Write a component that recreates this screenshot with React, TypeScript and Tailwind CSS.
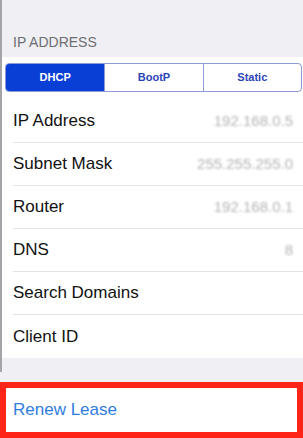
import React from 'react';

const rows: { label: string; value: string }[] = [
  { label: 'IP Address', value: '192.168.0.5' },
  { label: 'Subnet Mask', value: '255.255.255.0' },
  { label: 'Router', value: '192.168.0.1' },
  { label: 'DNS', value: '8' },
  { label: 'Search Domains', value: '' },
  { label: 'Client ID', value: '' },
];

export default function App() {
  return (
    <div className="w-[303px] h-[438px] overflow-hidden bg-[#efeff4] font-['Liberation_Sans',Arial,sans-serif]">
      <div className="border-l-2 border-[#a3a3a8] h-[372px] flex flex-col">
        <div className="h-[57px] flex items-end pl-[11px] pb-[4px]">
          <span className="text-[14px] text-[#6d6d72]">IP ADDRESS</span>
        </div>
        <div className="bg-white flex flex-col">
          <div className="pt-[6px] pl-[3px] pr-[1px]">
            <div className="grid grid-cols-3 h-[29px] rounded-[4px] border border-[#8f9bd6] overflow-hidden text-[11px] font-bold">
              <div className="bg-[#0a3fd6] text-white flex items-center justify-center">DHCP</div>
              <div className="text-[#2a44b8] flex items-center justify-center border-l border-[#8f9bd6]">BootP</div>
              <div className="text-[#2a44b8] flex items-center justify-center border-l border-[#8f9bd6]">Static</div>
            </div>
          </div>
          <div className="pt-[8px] pl-[11px]">
            {rows.map((r, i) => (
              <div
                key={r.label}
                className={`h-[43px] flex items-center justify-between pr-[10px] ${i < rows.length - 1 ? 'border-b border-[#e3e3e6]' : ''}`}
              >
                <span className="text-[17px] text-[#111]">{r.label}</span>
                {r.value && (
                  // values are blurred out in the shot
                  <span className="text-[15px] text-[#b4b4b8] blur-[1px]">{r.value}</span>
                )}
              </div>
            ))}
          </div>
        </div>
      </div>
      <div className="mt-[10px] border-[6px] border-[#ff2418] h-[56px] bg-white flex items-center pl-[7px]">
        <span className="text-[17px] font-medium text-[#2f7de1]">Renew Lease</span>
      </div>
    </div>
  );
}
